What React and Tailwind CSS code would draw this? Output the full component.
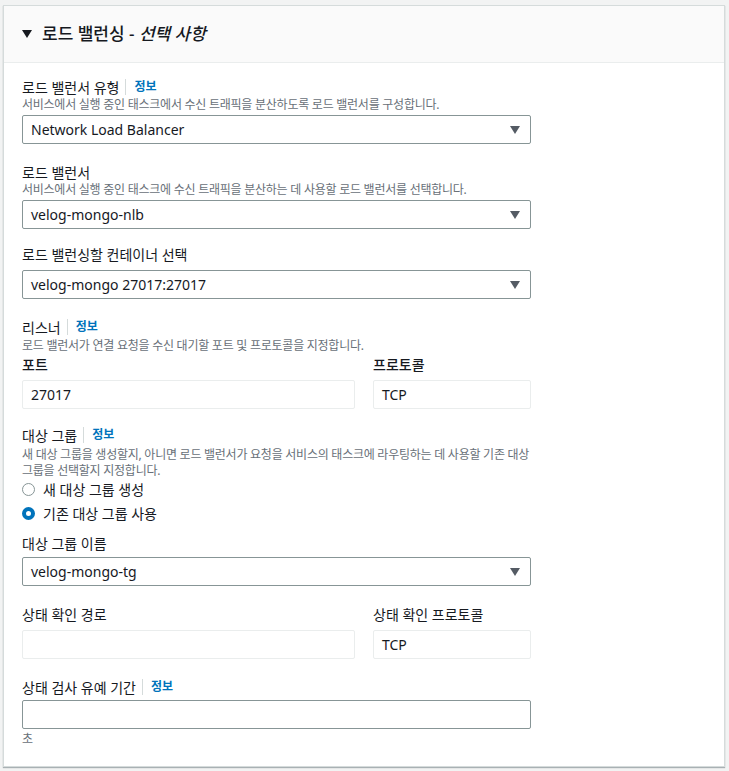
import { useState } from 'react'

const Info = () => (
  <>
    <span className="ml-[6px] mr-[8px] h-[16px] w-px bg-[#d5dbdb]" />
    <span className="text-[12px] font-bold text-[#0073bb]">정보</span>
  </>
)

const Label = ({ children, info, className = '' }) => (
  <div className={`flex items-center h-[20px] text-[14px] text-[#16191f] ${className}`}>
    <span>{children}</span>
    {info && <Info />}
  </div>
)

const Desc = ({ children, className = '' }) => (
  <p className={`text-[12px] leading-[16px] tracking-[-0.25px] text-[#687078] ${className}`}>{children}</p>
)

const Select = ({ value, className = '' }) => (
  <div className={`flex items-center justify-between w-[509px] h-[29px] border border-[#879596] rounded-[2px] bg-white pl-[8px] pr-[10px] ${className}`}>
    <span className="text-[14px] text-[#16191f]">{value}</span>
    <svg width="10" height="8" viewBox="0 0 10 8">
      <path d="M0 0h10L5 8z" fill="#545b64" />
    </svg>
  </div>
)

const ReadOnly = ({ value, className = '' }) => (
  <div className={`flex items-center h-[29px] border border-[#eaeded] rounded-[2px] bg-white px-[8px] text-[14px] text-[#16191f] ${className}`}>
    {value}
  </div>
)

const Radio = ({ checked, label, onClick }) => (
  <button type="button" onClick={onClick} className="flex items-center gap-[8px] h-[22px] text-[14px] text-[#16191f]">
    {checked ? (
      <span className="w-[13px] h-[13px] rounded-full border-[4px] border-[#0073bb] bg-white" />
    ) : (
      <span className="w-[13px] h-[13px] rounded-full border border-[#879596] bg-white" />
    )}
    <span>{label}</span>
  </button>
)

const App = () => {
  const [mode, setMode] = useState('existing')

  return (
    <div className="min-h-screen bg-[#f2f3f3] pt-[5px] pl-[3px] pr-[4px] pb-[6px] [font-family:'Noto_Sans','Noto_Sans_CJK_KR',sans-serif]">
      <div className="bg-white border border-[#d5dbdb] shadow-[0_1px_1px_rgba(0,28,36,0.3)]">
        <div className="flex items-center h-[57px] bg-[#fafafa] border-b border-[#eaeded] pl-[18px]">
          <svg width="10" height="8" viewBox="0 0 10 8" className="mr-[10px]">
            <path d="M0 0h10L5 8z" fill="#16191f" />
          </svg>
          <h2 className="text-[17px] text-[#16191f] font-medium">
            로드 밸런싱 - <i>선택 사항</i>
          </h2>
        </div>

        <div className="pl-[18px] pt-[14px] pb-[19px] w-[532px]">
          <Label info>로드 밸런서 유형</Label>
          <Desc>서비스에서 실행 중인 태스크에서 수신 트래픽을 분산하도록 로드 밸런서를 구성합니다.</Desc>
          <Select value="Network Load Balancer" className="mt-[2px]" />

          <Label className="mt-[18px]">로드 밸런서</Label>
          <Desc>서비스에서 실행 중인 태스크에 수신 트래픽을 분산하는 데 사용할 로드 밸런서를 선택합니다.</Desc>
          <Select value="velog-mongo-nlb" className="mt-[2px]" />

          <Label className="mt-[15px]">로드 밸런싱할 컨테이너 선택</Label>
          <Select value="velog-mongo 27017:27017" className="mt-[6px]" />

          <Label info className="mt-[18px]">리스너</Label>
          <Desc className="mt-[1px]">로드 밸런서가 연결 요청을 수신 대기할 포트 및 프로토콜을 지정합니다.</Desc>
          <div className="grid grid-cols-[333px_158px] gap-x-[18px]">
            <Label className="font-medium">포트</Label>
            <Label className="font-medium">프로토콜</Label>
            <ReadOnly value="27017" className="mt-[6px]" />
            <ReadOnly value="TCP" className="mt-[6px]" />
          </div>

          <Label info className="mt-[16px]">대상 그룹</Label>
          <Desc className="mt-[2px]">
            새 대상 그룹을 생성할지, 아니면 로드 밸런서가 요청을 서비스의 태스크에 라우팅하는 데 사용할 기존 대상
            그룹을 선택할지 지정합니다.
          </Desc>
          <div className="flex flex-col gap-[2px] -mt-[1px]">
            <Radio checked={mode === 'new'} label="새 대상 그룹 생성" onClick={() => setMode('new')} />
            <Radio checked={mode === 'existing'} label="기존 대상 그룹 사용" onClick={() => setMode('existing')} />
          </div>

          <Label className="mt-[9px]">대상 그룹 이름</Label>
          <Select value="velog-mongo-tg" className="mt-[4px]" />

          <div className="grid grid-cols-[333px_158px] gap-x-[18px] mt-[18px]">
            <Label>상태 확인 경로</Label>
            <Label>상태 확인 프로토콜</Label>
            <ReadOnly value="" className="mt-[6px]" />
            <ReadOnly value="TCP" className="mt-[6px]" />
          </div>

          <Label info className="mt-[18px]">상태 검사 유예 기간</Label>
          <div className="mt-[3px] w-[509px] h-[29px] border border-[#879596] rounded-[2px] bg-white" />
          <p className="mt-[2px] text-[12px] leading-[16px] text-[#687078]">초</p>
        </div>
      </div>
    </div>
  )
}

export default App
